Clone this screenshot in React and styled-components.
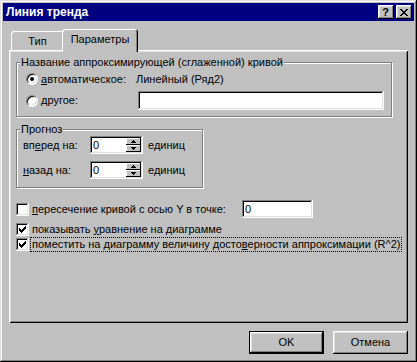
import React from 'react';
import styled, { createGlobalStyle } from 'styled-components';

const GlobalStyle = createGlobalStyle`
  html, body {
    margin: 0;
    padding: 0;
    background: #c0c0c0;
  }
  body {
    font-family: "Liberation Sans", Arial, sans-serif;
    font-size: 11px;
    color: #000;
  }
  * { box-sizing: border-box; }
`;

// win98 bevels
const raised = `
  box-shadow: inset -1px -1px #000, inset 1px 1px #fff,
    inset -2px -2px #808080, inset 2px 2px #dfdfdf;
`;
const sunken = `
  box-shadow: inset -1px -1px #fff, inset 1px 1px #808080,
    inset -2px -2px #dfdfdf, inset 2px 2px #000;
`;

const Window = styled.div`
  width: 417px;
  height: 362px;
  padding: 3px;
  background: #c0c0c0;
  box-shadow: inset -1px -1px #000, inset 1px 1px #dfdfdf,
    inset -2px -2px #808080, inset 2px 2px #fff;
  display: flex;
  flex-direction: column;
`;

const TitleBar = styled.div`
  height: 18px;
  background: #000080;
  color: #fff;
  font-weight: bold;
  display: flex;
  align-items: center;
  padding: 0 2px 0 3px;
`;

const TitleText = styled.div`
  flex: 1;
  font-size: 12px;
  line-height: 14px;
`;

const CaptionButton = styled.div`
  width: 16px;
  height: 14px;
  margin-left: ${(p) => p.$gap || 0}px;
  background: #c0c0c0;
  ${raised}
  display: flex;
  align-items: center;
  justify-content: center;
  color: #000;
  font-weight: bold;
  font-size: 11px;
  line-height: 11px;
  padding-right: 1px;
`;

const Body = styled.div`
  padding: 8px 6px 0;
  display: flex;
  flex-direction: column;
`;

const Tabs = styled.div`
  display: flex;
  align-items: flex-end;
  height: 23px;
  margin-bottom: -2px;
  padding-left: 2px;
  position: relative;
  z-index: 1;
`;

const Tab = styled.div`
  position: relative;
  z-index: ${(p) => (p.$active ? 2 : 1)};
  width: ${(p) => p.$width}px;
  height: ${(p) => (p.$active ? 23 : 19)}px;
  margin: ${(p) => (p.$active ? '0 -2px 0' : '0 0 2px')};
  background: #c0c0c0;
  border-radius: 3px 3px 0 0;
  box-shadow: inset 1px 1px #fff, inset -1px 0 #000, inset -2px 0 #808080;
  text-align: center;
  padding-top: 4px;
  line-height: 13px;
`;

const Panel = styled.div`
  height: 273px;
  background: #c0c0c0;
  box-shadow: inset 1px 1px #fff, inset -1px -1px #000,
    inset 2px 2px #dfdfdf, inset -2px -2px #808080;
  padding: 12px 0 0 7px;
  display: flex;
  flex-direction: column;
  align-items: flex-start;
`;

const Group = styled.div`
  position: relative;
  width: ${(p) => p.$width}px;
  height: ${(p) => p.$height}px;
  margin-top: ${(p) => p.$top || 0}px;
  border: 1px solid #808080;
  box-shadow: 1px 1px 0 #fff, inset 1px 1px 0 #fff;
  padding: ${(p) => p.$pad};
  display: flex;
  flex-direction: column;
`;

const Legend = styled.span`
  position: absolute;
  top: -7px;
  left: 3px;
  padding: 0 1px;
  background: #c0c0c0;
  line-height: 13px;
`;

const Row = styled.div`
  display: flex;
  align-items: center;
  height: ${(p) => p.$h}px;
  margin-top: ${(p) => p.$top || 0}px;
  line-height: 13px;
  white-space: nowrap;
`;

const Cell = styled.div`
  display: flex;
  align-items: center;
  width: ${(p) => p.$width}px;
  flex: none;
`;

const Radio = styled.span`
  position: relative;
  width: 12px;
  height: 12px;
  margin-right: 3px;
  flex: none;
  border-radius: 50%;
  background: #fff;
  border: 1px solid;
  border-color: #808080 #fff #fff #808080;
  box-shadow: inset 1px 1px #000, inset -1px -1px #dfdfdf;

  &::after {
    content: '';
    display: ${(p) => (p.$checked ? 'block' : 'none')};
    position: absolute;
    left: 3px;
    top: 3px;
    width: 4px;
    height: 4px;
    border-radius: 50%;
    background: #000;
  }
`;

const Field = styled.div`
  width: ${(p) => p.$width}px;
  height: ${(p) => p.$height}px;
  margin-left: ${(p) => p.$left || 0}px;
  background: #fff;
  ${sunken}
  padding: 2px 3px;
  line-height: 14px;
  flex: none;
`;

const Spin = styled.div`
  width: 53px;
  height: 18px;
  background: #fff;
  ${sunken}
  padding: 2px;
  display: flex;
  flex: none;
`;

const SpinValue = styled.div`
  flex: 1;
  padding-left: 1px;
  line-height: 14px;
`;

const SpinButtons = styled.div`
  width: 15px;
  display: flex;
  flex-direction: column;
`;

const SpinButton = styled.div`
  height: 7px;
  background: #c0c0c0;
  box-shadow: inset -1px -1px #000, inset 1px 1px #fff;
  display: flex;
  align-items: center;
  justify-content: center;
`;

const Unit = styled.span`
  margin-left: 5px;
`;

const Checkbox = styled.span`
  width: 13px;
  height: 13px;
  margin-right: 3px;
  flex: none;
  background: #fff;
  ${sunken}
  display: flex;
  align-items: center;
  justify-content: center;
`;

const Focus = styled.span`
  outline: 1px dotted #000;
  padding: 0 1px;
  margin-left: -1px;
  line-height: 13px;
`;

const Buttons = styled.div`
  display: flex;
  justify-content: flex-end;
  gap: 9px;
  margin-top: 8px;
`;

const Button = styled.div`
  width: 75px;
  height: 23px;
  background: #c0c0c0;
  display: flex;
  align-items: center;
  justify-content: center;
  line-height: 13px;
  box-shadow: ${(p) => (p.$default
    ? 'inset 0 0 0 1px #000, inset -2px -2px #000, inset 2px 2px #fff, inset -3px -3px #808080, inset 3px 3px #dfdfdf'
    : 'inset -1px -1px #000, inset 1px 1px #fff, inset -2px -2px #808080, inset 2px 2px #dfdfdf')};
`;

const CloseIcon = () => (
  <svg width="8" height="7" viewBox="0 0 8 7" shapeRendering="crispEdges">
    <path d="M0 0h2v1h1v1h2V1h1V0h2v1H7v1H6v1H5v1h1v1h1v1h1v1H6V6H5V5H3v1H2v1H0V6h1V5h1V4h1V3H2V2H1V1H0z" fill="#000" />
  </svg>
);

const Arrow = ({ down }) => (
  <svg width="5" height="3" viewBox="0 0 5 3" shapeRendering="crispEdges">
    <path d={down ? 'M0 0h5L2.5 3z' : 'M0 3h5L2.5 0z'} fill="#000" />
  </svg>
);

const Check = () => (
  <svg width="7" height="7" viewBox="0 0 7 7" shapeRendering="crispEdges">
    <polygon points="0,2 2,4 6,0 7,0 7,2 2,7 0,5" fill="#000" />
  </svg>
);

const Spinner = ({ value }) => (
  <Spin>
    <SpinValue>{value}</SpinValue>
    <SpinButtons>
      <SpinButton><Arrow /></SpinButton>
      <SpinButton><Arrow down /></SpinButton>
    </SpinButtons>
  </Spin>
);

const App = () => (
  <>
    <GlobalStyle />
    <Window>
      <TitleBar>
        <TitleText>Линия тренда</TitleText>
        <CaptionButton>?</CaptionButton>
        <CaptionButton $gap={2}><CloseIcon /></CaptionButton>
      </TitleBar>
      <Body>
        <Tabs>
          <Tab $width={53}>Тип</Tab>
          <Tab $width={76} $active>Параметры</Tab>
        </Tabs>
        <Panel>
          <Group $width={376} $height={55} $pad="8px 0 6px 9px">
            <Legend>Название аппроксимирующей (сглаженной) кривой</Legend>
            <Row $h={16}>
              <Cell $width={110}>
                <Radio $checked />
                <span><u>а</u>втоматическое:</span>
              </Cell>
              <span>Линейный (Ряд2)</span>
            </Row>
            <Row $h={19} $top={4}>
              <Cell $width={110}>
                <Radio />
                <span><u>д</u>ругое:</span>
              </Cell>
              <Field $width={246} $height={19} $left={2} />
            </Row>
          </Group>
          <Group $width={187} $height={59} $top={12} $pad="6px 0 8px 6px">
            <Legend>Прогноз</Legend>
            <Row $h={18}>
              <Cell $width={67}>вп<u>е</u>ред на:</Cell>
              <Spinner value="0" />
              <Unit>единиц</Unit>
            </Row>
            <Row $h={18} $top={7}>
              <Cell $width={67}><u>н</u>азад на:</Cell>
              <Spinner value="0" />
              <Unit>единиц</Unit>
            </Row>
          </Group>
          <Row $h={18} $top={12}>
            <Cell $width={226}>
              <Checkbox />
              <span><u>п</u>ересечение кривой с осью Y в точке:</span>
            </Cell>
            <Field $width={71} $height={18}>0</Field>
          </Row>
          <Row $h={14} $top={4}>
            <Checkbox><Check /></Checkbox>
            <span>показывать <u>у</u>равнение на диаграмме</span>
          </Row>
          <Row $h={14} $top={1}>
            <Checkbox><Check /></Checkbox>
            <Focus>поместить на диаграмму величину досто<u>в</u>ерности аппроксимации (R^2)</Focus>
          </Row>
        </Panel>
        <Buttons>
          <Button $default>OK</Button>
          <Button>Отмена</Button>
        </Buttons>
      </Body>
    </Window>
  </>
);

export default App;
